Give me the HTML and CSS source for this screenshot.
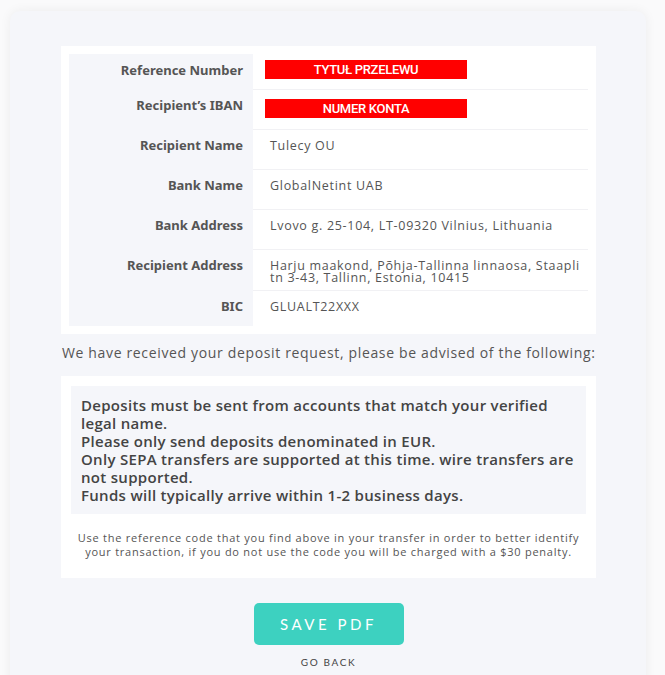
FILE: index.html
```html
<!DOCTYPE html>
<html lang="en">
<head>
    <meta charset="UTF-8">
    <meta name="viewport" content="width=device-width, initial-scale=1.0">
    <title>Deposit Details</title>
    <link rel="stylesheet" href="styles.css">
</head>
<body>
    <div class="card">
        <div class="details-box">
            <div class="details">
                <div class="row row-first">
                    <div class="label">Reference Number</div>
                    <div class="value"><span class="tag tag-first">TYTUŁ PRZELEWU</span></div>
                </div>
                <div class="row">
                    <div class="label">Recipient’s IBAN</div>
                    <div class="value"><span class="tag">NUMER KONTA</span></div>
                </div>
                <div class="row">
                    <div class="label">Recipient Name</div>
                    <div class="value">Tulecy OU</div>
                </div>
                <div class="row">
                    <div class="label">Bank Name</div>
                    <div class="value">GlobalNetint UAB</div>
                </div>
                <div class="row">
                    <div class="label">Bank Address</div>
                    <div class="value">Lvovo g. 25-104, LT-09320 Vilnius, Lithuania</div>
                </div>
                <div class="row row-tall">
                    <div class="label">Recipient Address</div>
                    <div class="value">Harju maakond, Põhja-Tallinna linnaosa, Staapli tn 3-43, Tallinn, Estonia, 10415</div>
                </div>
                <div class="row row-last">
                    <div class="label">BIC</div>
                    <div class="value">GLUALT22XXX</div>
                </div>
            </div>
        </div>

        <p class="intro">We have received your deposit request, please be advised of the following:</p>

        <div class="notice-box">
            <div class="notice">
                Deposits must be sent from accounts that match your verified legal name.<br>
                Please only send deposits denominated in EUR.<br>
                Only SEPA transfers are supported at this time. wire transfers are not supported.<br>
                Funds will typically arrive within 1-2 business days.
            </div>
            <p class="footnote">Use the reference code that you find above in your transfer in order to better identify your transaction, if you do not use the code you will be charged with a $30 penalty.</p>
        </div>

        <div class="actions">
            <button class="save-button">SAVE PDF</button>
            <a class="back-link" href="#">GO BACK</a>
        </div>
    </div>
</body>
</html>
```

FILE: styles.css
```css
body {
    font-family: "Open Sans", Lato, sans-serif;
    background-color: #fafafb;
    margin: 0;
    padding: 11px 19px 0 10px;
    color: #555;
}

.card {
    background-color: #f5f6fa;
    border-radius: 10px;
    box-shadow: 0 0 12px rgba(0, 0, 0, 0.06);
    padding: 35px 50px 40px 51px;
}

/* Details table */
.details-box {
    background-color: #fff;
    padding: 8px;
}

.row {
    display: flex;
    height: 40px;
}

.row-first {
    height: 35px;
}

.row-tall {
    height: 41px;
}

.row-last {
    height: 36px;
}

.label {
    width: 174px;
    flex-shrink: 0;
    background-color: #f5f6fa;
    text-align: right;
    padding: 8px 10px 0 0;
    font-family: "Noto Sans", sans-serif;
    font-size: 13px;
    font-weight: 700;
    line-height: 17px;
    color: #555;
}

.value {
    flex: 1;
    border-top: 1px solid #f1f1f4;
    padding: 10px 6px 0 17px;
    font-size: 12.5px;
    line-height: 12px;
    letter-spacing: 0.7px;
    color: #555;
}

.row-first .value {
    border-top: none;
}

.tag {
    display: block;
    width: 202px;
    height: 19px;
    margin: -1px 0 0 -5px;
    background-color: #ff0000;
    color: #fff;
    text-align: center;
    font-family: Roboto, sans-serif;
    font-size: 13px;
    font-weight: 500;
    letter-spacing: -0.3px;
    line-height: 20px;
}

.tag-first {
    margin-top: -4px;
}

.intro {
    margin: 11px 0 15px 1px;
    font-size: 14px;
    line-height: 16px;
    letter-spacing: 0.65px;
    color: #555;
}

/* Notice box */
.notice-box {
    background-color: #fff;
    padding: 10px 10px 19px;
}

.notice {
    background-color: #f5f6fa;
    padding: 10px 4px 10px 10px;
    font-size: 15px;
    font-weight: 600;
    line-height: 18px;
    letter-spacing: 0.3px;
    color: #444;
}

.footnote {
    margin: 17px 0 0;
    text-align: center;
    font-size: 11px;
    line-height: 14px;
    letter-spacing: 0.75px;
    color: #555;
}

.actions {
    display: flex;
    flex-direction: column;
    align-items: center;
    padding-top: 25px;
}

.save-button {
    width: 150px;
    height: 42px;
    border: none;
    border-radius: 5px;
    background-color: #3dd1c0;
    color: #fff;
    font-family: Lato, sans-serif;
    font-size: 15px;
    letter-spacing: 3.5px;
    cursor: pointer;
}

.back-link {
    margin-top: 11px;
    font-family: Lato, sans-serif;
    font-size: 10px;
    letter-spacing: 1.6px;
    color: #444;
    text-decoration: none;
}
```
